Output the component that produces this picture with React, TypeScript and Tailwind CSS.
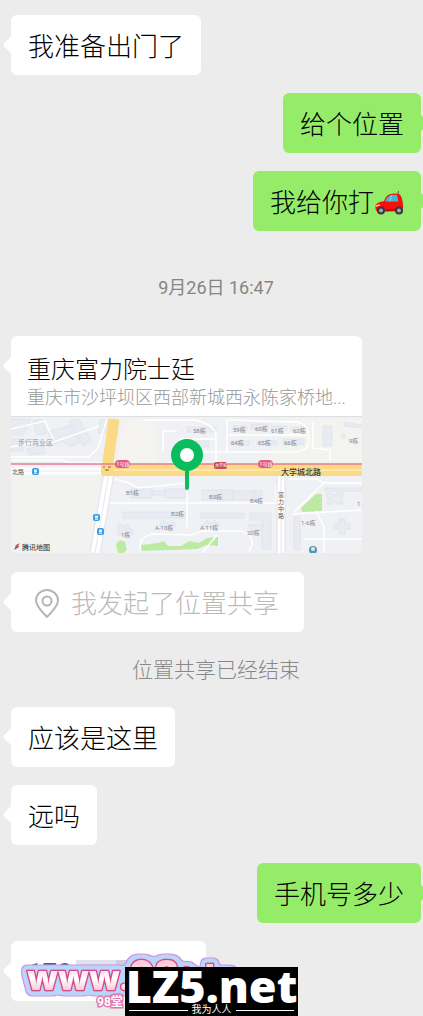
import type { ReactNode } from "react";

type Side = "left" | "right";

function Bubble({ side, children }: { side: Side; children: ReactNode }) {
  const mine = side === "right";

  return (
    <div className={mine ? "flex justify-end" : "flex justify-start"}>
      <div
        className={
          mine
            ? "relative flex min-h-[60px] items-center rounded-md bg-[#95ec69] px-[17px] pt-1"
            : "relative flex min-h-[60px] items-center rounded-md bg-white px-[17px] pt-1"
        }
      >
        <Tail side={side} />
        {children}
      </div>
    </div>
  );
}

function Tail({ side }: { side: Side }) {
  return side === "right" ? (
    <svg className="absolute top-[21px] left-full h-[18px] w-2" viewBox="0 0 8 18" aria-hidden="true">
      <path d="M0 1 L7 7.5 Q8 9 7 10.5 L0 17Z" fill="#95ec69" />
    </svg>
  ) : (
    <svg className="absolute top-[21px] right-full h-[18px] w-2" viewBox="0 0 8 18" aria-hidden="true">
      <path d="M8 0 L1 7.5 Q0 9 1 10.5 L8 17Z" fill="#fff" />
    </svg>
  );
}

function Car() {
  return (
    <svg className="h-[26px] w-[30px]" viewBox="0 0 30 26" role="img" aria-label="car">
      <path d="M24 4 L24.5 1" stroke="#555" strokeWidth="1" />
      <path
        d="M1.5 16 Q2 13 6 12 L10 11 Q12 5 17 4 Q22 3 26 4.5 Q28.5 8 29 15 Q29.5 20 27 21 L4 22 Q1 21 1.5 16Z"
        fill="#f5100c"
      />
      <path d="M11 11.5 Q13 6 17.5 5 Q21 4.5 23 5 L24.5 11.5Z" fill="#48b5cf" />
      <path d="M17.5 5 L16 11.5" stroke="#8bdcec" strokeWidth="1" />
      <path d="M2 16 L6 15" stroke="#ffd0a0" strokeWidth="1.5" />
      <path d="M12 20 H22" stroke="#a80907" strokeWidth="1.5" />
      <circle cx="7" cy="20.5" r="4" fill="#343841" />
      <circle cx="7" cy="20.5" r="2" fill="#a3a9b2" />
      <circle cx="25" cy="20.5" r="4" fill="#343841" />
      <circle cx="25" cy="20.5" r="2" fill="#a3a9b2" />
    </svg>
  );
}

const blockLabels = [
  { x: 182, y: 16, text: "58栋" },
  { x: 222, y: 15, text: "59栋" },
  { x: 244, y: 14, text: "60栋" },
  { x: 260, y: 16, text: "61栋" },
  { x: 282, y: 16, text: "62栋" },
  { x: 220, y: 28, text: "64栋" },
  { x: 247, y: 28, text: "65栋" },
  { x: 273, y: 28, text: "66栋" },
  { x: 338, y: 26, text: "9栋" },
  { x: 115, y: 78, text: "B1栋" },
  { x: 160, y: 99, text: "B2栋" },
  { x: 198, y: 82, text: "B3栋" },
  { x: 239, y: 86, text: "B4栋" },
  { x: 144, y: 113, text: "A-10栋" },
  { x: 189, y: 113, text: "A-11栋" },
  { x: 110, y: 120, text: "1栋" },
  { x: 236, y: 118, text: "20栋" },
  { x: 290, y: 108, text: "1-6栋" },
  { x: 346, y: 89, text: "1" },
];

function BusStop({ x, y }: { x: number; y: number }) {
  return (
    <g>
      <rect x={x} y={y} width="7" height="7" rx="2" fill="#3d9be0" />
      <rect x={x + 2} y={y + 1.5} width="3" height="3" fill="#d8efff" />
      <path d={`M${x + 2} ${y + 5.5} h3`} stroke="#d8efff" strokeWidth="0.8" />
    </g>
  );
}

function MapPreview() {
  return (
    <svg className="block w-full" viewBox="0 0 351 136" role="img" aria-label="地图">
      <rect width="351" height="136" fill="#f0f1f4" />
      <path d="M0 58 H97 L88 136 H0Z" fill="#f2f2f1" />
      <path d="M112 2 H146 V44 H106Z" fill="#f4f3ef" />
      <path d="M275 2 H351 V44 H256 L268 30Z" fill="#f3f3f0" />

      {/* buildings */}
      <g fill="#e9ebf2" stroke="#dee2eb" strokeWidth="0.8">
        <path d="M0 2 H20 L12 18 H0Z M22 4 L30 2 L36 16 L26 18Z M38 14 L62 8 L69 25 L59 30 L52 24 L38 30Z" />
        <path d="M58 4 L68 2 L80 24 L72 29Z M0 22 H12 V34 H0Z M16 32 L32 28 L34 36 L18 38Z M89 3 H97 L94 16 H87Z" />
        <path d="M176 10 H205 V15 H176Z M176 24 H198 V30 H176Z M222 9 H236 V13 H222Z M240 7 H257 V12 H240Z M260 9 H276 V13 H260Z M280 10 H295 V14 H280Z M219 24 H238 V28 H219Z M246 24 H266 V28 H246Z M272 22 H293 V28 H272Z" />
        <path d="M312 9 H321 V29 H312Z M333 5 L350 8 V11 L333 9Z M119 72 H141 V81 H119Z M141 74 H154 V78 H141Z M154 72 H176 V81 H154Z" />
        <path d="M191 73 H211 V83 H191Z M211 73 H222 V83 H211Z M222 74 H242 V83 H222Z M243 74 H251 V84 H243Z" />
        <path d="M112 95 H174 V101 H112Z M190 96 H233 V101 H190Z M239 96 H260 V132 H251 V103 H239Z M283 100 H289 V133 H283Z" />
        <path d="M107 108 h4 v2 h3 v-2 h4 v4 h4 v6 h-15Z M149 107 l4 -4 l4 4 l4 -4 l4 4 v3 h-16Z M192 107 l4 -4 l4 4 l4 -4 l4 4 v3 h-16Z M237 108 h16 l-4 6 h-8Z" />
        <path d="M314 71 H351 V74 H314Z M316 76 h5 l3 2 l3 -2 h5 v4 l-3 2 l3 2 v3 h-5 l-3 -2 l-3 2 h-5 v-3 l3 -2 l-3 -2Z" />
        <path d="M328 102 h6 v5 h5 v5 h-5 v5 h-6 v-5 h-5 v-5 h5Z" />
        <circle cx="332" cy="19" r="2" />
      </g>

      {/* parks */}
      <g fill="#bceaa3">
        <path d="M105 128 Q107 121 114 125 L116 133 L112 136 H107Z" />
        <path d="M130 128 L147 126 L153 124 L157 129 H170 L178 124 L188 126 L196 121 L207 120 V129 L196 128 L186 132 L130 134Z" />
        <path d="M290 91 L305 77 L311 77 V94 L291 95Z" />
      </g>

      {/* minor roads */}
      <g fill="none" stroke="#fff" strokeWidth="1.5">
        <path d="M0 40 H78 L87 31 L96 2 M0 12 L34 4 L42 22 L0 30 M40 26 L88 9 M0 43 H52 L60 46 H92" />
        <path d="M132 3 H184 Q204 8 205 18 V45 M205 22 H168 M216 2 V34 M218 3 L286 5 Q301 8 297 28 Q296 33 286 35 H168 M218 18 H297" />
        <path d="M302 5 V31 L319 33 V44 M152 35 V14 H166 M104 62 L118 66 L127 71 L176 66 V84 M96 86 H265 V69 L275 65" />
        <path d="M176 84 V110 M130 134 Q126 121 141 117 L180 118 L191 114 H230 Q247 120 238 134 M206 118 L191 136" />
        <path d="M278 62 H306 L313 66 H351 M313 66 L283 95 M281 97 L351 93 M305 94 L313 110 V136 M293 122 H351" />
      </g>

      {/* main roads */}
      <path d="M0 54 H100" stroke="#fff" strokeWidth="7" />
      <path d="M0 54 H100" stroke="#e6e8ed" strokeWidth="1" />
      <path d="M98 56 L84 136" stroke="#dfe2e9" strokeWidth="11" />
      <path d="M98 56 L84 136" stroke="#fff" strokeWidth="9" />
      <path d="M98 56 L84 136" stroke="#e3e6ed" strokeWidth="1" />
      <path d="M270 56 V136" stroke="#dfe2e9" strokeWidth="9" />
      <path d="M270 56 V136" stroke="#fff" strokeWidth="7" />
      <path d="M270 56 V136" stroke="#e3e6ed" strokeWidth="1" />
      <path d="M103 2 L96 52" stroke="#fada84" strokeWidth="11" />
      <rect x="90" y="47" width="261" height="12" rx="2" fill="#fada84" />
      <path d="M102 53 H351" stroke="#fff4cf" strokeWidth="1" />
      <path d="M0 47 H351" stroke="#e77b94" strokeWidth="1.5" />
      <path d="M92 50 h2 M97 50 h3" stroke="#b84d43" strokeWidth="1" />
      <path d="M94 53 h4" stroke="#377a58" strokeWidth="1" />

      <rect x="104" y="43" width="15" height="8" rx="4" fill="#e45b82" />
      <rect x="203" y="45" width="13" height="7" rx="2" fill="#c94b58" />
      <rect x="247" y="43" width="15" height="8" rx="4" fill="#e45b82" />
      <g fill="#fff" textAnchor="middle">
        <text x="112" y="49" fontSize="5">1号线</text>
        <text x="210" y="50" fontSize="4">大学城</text>
        <text x="255" y="49" fontSize="5">1号线</text>
      </g>

      <BusStop x={21} y={51} />
      <BusStop x={82} y={97} />
      <BusStop x={86} y={111} />
      <circle cx="302" cy="133" r="4" fill="#5794b5" />
      <circle cx="302" cy="132" r="2" fill="#dcebf3" />

      <g fill="#7d8797" fontSize="6">
        {blockLabels.map((label) => (
          <text key={label.text} x={label.x} y={label.y}>
            {label.text}
          </text>
        ))}
      </g>
      <text x="7" y="28" fill="#8c99ae" fontSize="7">步行商业区</text>
      <text x="1" y="57" fill="#555" fontSize="6">北路</text>
      <text x="270" y="58" fill="#3d3a35" fontSize="8" fontWeight="500">大学城北路</text>
      <g fill="#555b66" fontSize="6">
        <text x="267" y="80">富</text>
        <text x="267" y="87">力</text>
        <text x="267" y="94">中</text>
        <text x="267" y="101">路</text>
      </g>

      <path d="M3 133 L6 127 L8 130Z" fill="#2b63c6" />
      <path d="M9 126 L6 131 L4 129Z" fill="#e54a38" />
      <text x="11" y="133" fill="#222" fontSize="7">腾讯地图</text>

      <path d="M176 48 V71" stroke="#09bd5d" strokeWidth="4" strokeLinecap="round" />
      <circle cx="176" cy="38" r="11.5" fill="#fff" stroke="#09bd5d" strokeWidth="9" />
    </svg>
  );
}

function LocationCard() {
  return (
    <div className="relative mb-px w-[351px] max-w-full rounded-md bg-white">
      <Tail side="left" />
      <div className="border-b border-[#dedede] px-4 pt-[19px] pb-[6px]">
        <h2 className="text-[24px] leading-[30px] font-light text-black">重庆富力院士廷</h2>
        <p className="truncate text-[18px] leading-[25px] font-light text-[#999]">
          重庆市沙坪坝区西部新城西永陈家桥地...
        </p>
      </div>
      <div className="overflow-hidden rounded-b-md">
        <MapPreview />
      </div>
    </div>
  );
}

function SiteBanner() {
  return (
    <svg className="absolute top-[8px] left-2 h-[62px] w-[240px]" viewBox="0 0 240 62" aria-hidden="true">
      <defs>
        <linearGradient id="candy" x1="0" y1="0" x2="0" y2="1">
          <stop offset="0.3" stopColor="#fbc9d8" />
          <stop offset="0.6" stopColor="#ffffff" />
          <stop offset="1" stopColor="#ef8fb0" />
        </linearGradient>
        {/* blue halo with a thin lilac rim, rounded by blurring and then thresholding */}
        <filter id="halo" x="-10%" y="-30%" width="120%" height="160%">
          <feMorphology in="SourceAlpha" operator="dilate" radius="3" />
          <feGaussianBlur stdDeviation="2" />
          <feComponentTransfer result="outer">
            <feFuncA type="linear" slope="8" intercept="-1" />
          </feComponentTransfer>
          <feFlood floodColor="#cf8fdc" />
          <feComposite in2="outer" operator="in" result="rim" />
          <feMorphology in="outer" operator="erode" radius="1" result="inner" />
          <feFlood floodColor="#b9d6fa" />
          <feComposite in2="inner" operator="in" result="fill" />
          <feMerge>
            <feMergeNode in="rim" />
            <feMergeNode in="fill" />
            <feMergeNode in="SourceGraphic" />
          </feMerge>
        </filter>
      </defs>
      <text
        x="8"
        y="41"
        fontFamily="Open Sans, sans-serif"
        fontSize="34"
        fontWeight="800"
        fill="url(#candy)"
        stroke="#d9488a"
        strokeWidth="3"
        strokeLinejoin="round"
        paintOrder="stroke"
        filter="url(#halo)"
      >
        www.<tspan fontSize="42">98</tspan>t.la
      </text>
      <text x="78" y="57" fontSize="12" fontWeight="700" fill="#fff" stroke="#df7ab0" strokeWidth="3" paintOrder="stroke">
        98堂
      </text>
    </svg>
  );
}

function LogoPlate() {
  return (
    <div className="absolute top-[26px] left-[114px] flex h-[49px] w-[173px] flex-col items-center overflow-hidden bg-black text-white">
      <strong className="font-['Noto_Sans'] text-[45px] leading-[37px] font-black">LZ5.net</strong>
      <div className="flex w-full items-center gap-1 px-1 text-[10px] leading-3">
        <span className="h-px flex-1 bg-white" />
        我为人人
        <span className="h-px flex-1 bg-white" />
      </div>
    </div>
  );
}

const textClass = "text-[26px] leading-[36px] font-light text-black";

export default function App() {
  return (
    <main className="flex min-h-screen flex-col gap-[18px] overflow-hidden bg-[#ececec] pt-[15px] pr-[2px] pb-[15px] pl-[11px] font-['Roboto','Noto_Sans_CJK_SC',sans-serif]">
      <Bubble side="left">
        <p className={textClass}>我准备出门了</p>
      </Bubble>
      <Bubble side="right">
        <p className={textClass}>给个位置</p>
      </Bubble>
      <Bubble side="right">
        <p className={textClass}>我给你打</p>
        <Car />
      </Bubble>

      <time className="pt-[30px] pb-[22px] text-center text-[18px] leading-[17px] text-[#858585]">
        9月26日 16:47
      </time>

      <LocationCard />

      <Bubble side="left">
        <div className="flex items-center gap-3 pr-2 pl-[7px]">
          <svg className="h-[30px] w-6" viewBox="0 0 24 30" fill="none" stroke="#b5b5b5" strokeWidth="2" aria-hidden="true">
            <path d="M12 28 Q1 17 1 11.5 A11 10.5 0 0 1 23 11.5 Q23 17 12 28Z" strokeLinejoin="round" />
            <circle cx="12" cy="12" r="4.5" />
          </svg>
          <p className="text-[26px] leading-[36px] font-light text-[#bbb]">我发起了位置共享</p>
        </div>
      </Bubble>

      <p className="pt-[5px] pb-[3px] text-center text-[21px] leading-[31px] font-light text-[#888]">
        位置共享已经结束
      </p>

      <Bubble side="left">
        <p className={textClass}>应该是这里</p>
      </Bubble>
      <Bubble side="left">
        <p className={textClass}>远吗</p>
      </Bubble>
      <Bubble side="right">
        <p className={textClass}>手机号多少</p>
      </Bubble>

      <div className="relative">
        <Bubble side="left">
          <div className="flex w-[161px] items-center">
            <a className="text-[26px] leading-[36px] text-[#45618f]" href="#phone">170</a>
            <span className="ml-1 h-[26px] w-10 bg-[#dfe2ec]" />
            <span className="h-[26px] w-8 bg-[#c9cee2]" />
          </div>
        </Bubble>
        <SiteBanner />
        <LogoPlate />
      </div>
    </main>
  );
}
